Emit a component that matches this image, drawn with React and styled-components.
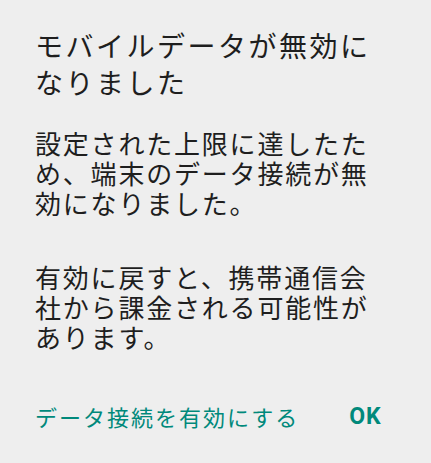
import React from 'react'
import styled, { createGlobalStyle } from 'styled-components'

const GlobalStyle = createGlobalStyle`
    html, body {
        margin: 0;
        padding: 0;
        background: #eeeeee;
    }
    body {
        font-family: "Noto Sans CJK JP", "Roboto", sans-serif;
        color: #1e1e1e;
    }
`;

const Dialog = styled.div`
    width: 431px;
    height: 463px;
    box-sizing: border-box;
    padding: 27px 36px 0 35px;
    background: #eeeeee;
    display: flex;
    flex-direction: column;
`;

const Title = styled.h2`
    margin: 0;
    font-size: 28px;
    font-weight: 400;
    line-height: 37px;
    letter-spacing: 2.5px;
`;

const Message = styled.p`
    margin: ${props => props.first ? '27px' : '44px'} 0 0 0;
    font-size: 26px;
    line-height: 30px;
    letter-spacing: 1.8px;
`;

const Actions = styled.div`
    display: flex;
    align-items: center;
    margin-top: 48px;
    gap: 50px;
`;

const ActionButton = styled.button`
    background: transparent;
    border: none;
    padding: 0;
    font-family: ${props => props.bold ? '"Roboto", sans-serif' : '"Noto Sans CJK JP", sans-serif'};
    font-size: ${props => props.bold ? '23px' : '22px'};
    font-weight: ${props => props.bold ? 700 : 400};
    letter-spacing: ${props => props.bold ? '0.8px' : '2px'};
    color: #00897b;
    cursor: pointer;
`;

export default function App() {
    return (
        <>
            <GlobalStyle />
            <Dialog>
                <Title>モバイルデータが無効に<br />なりました</Title>
                <Message first>設定された上限に達したた<br />め、端末のデータ接続が無<br />効になりました。</Message>
                <Message>有効に戻すと、携帯通信会<br />社から課金される可能性が<br />あります。</Message>
                <Actions>
                    <ActionButton>データ接続を有効にする</ActionButton>
                    <ActionButton bold>OK</ActionButton>
                </Actions>
            </Dialog>
        </>
    )
}
